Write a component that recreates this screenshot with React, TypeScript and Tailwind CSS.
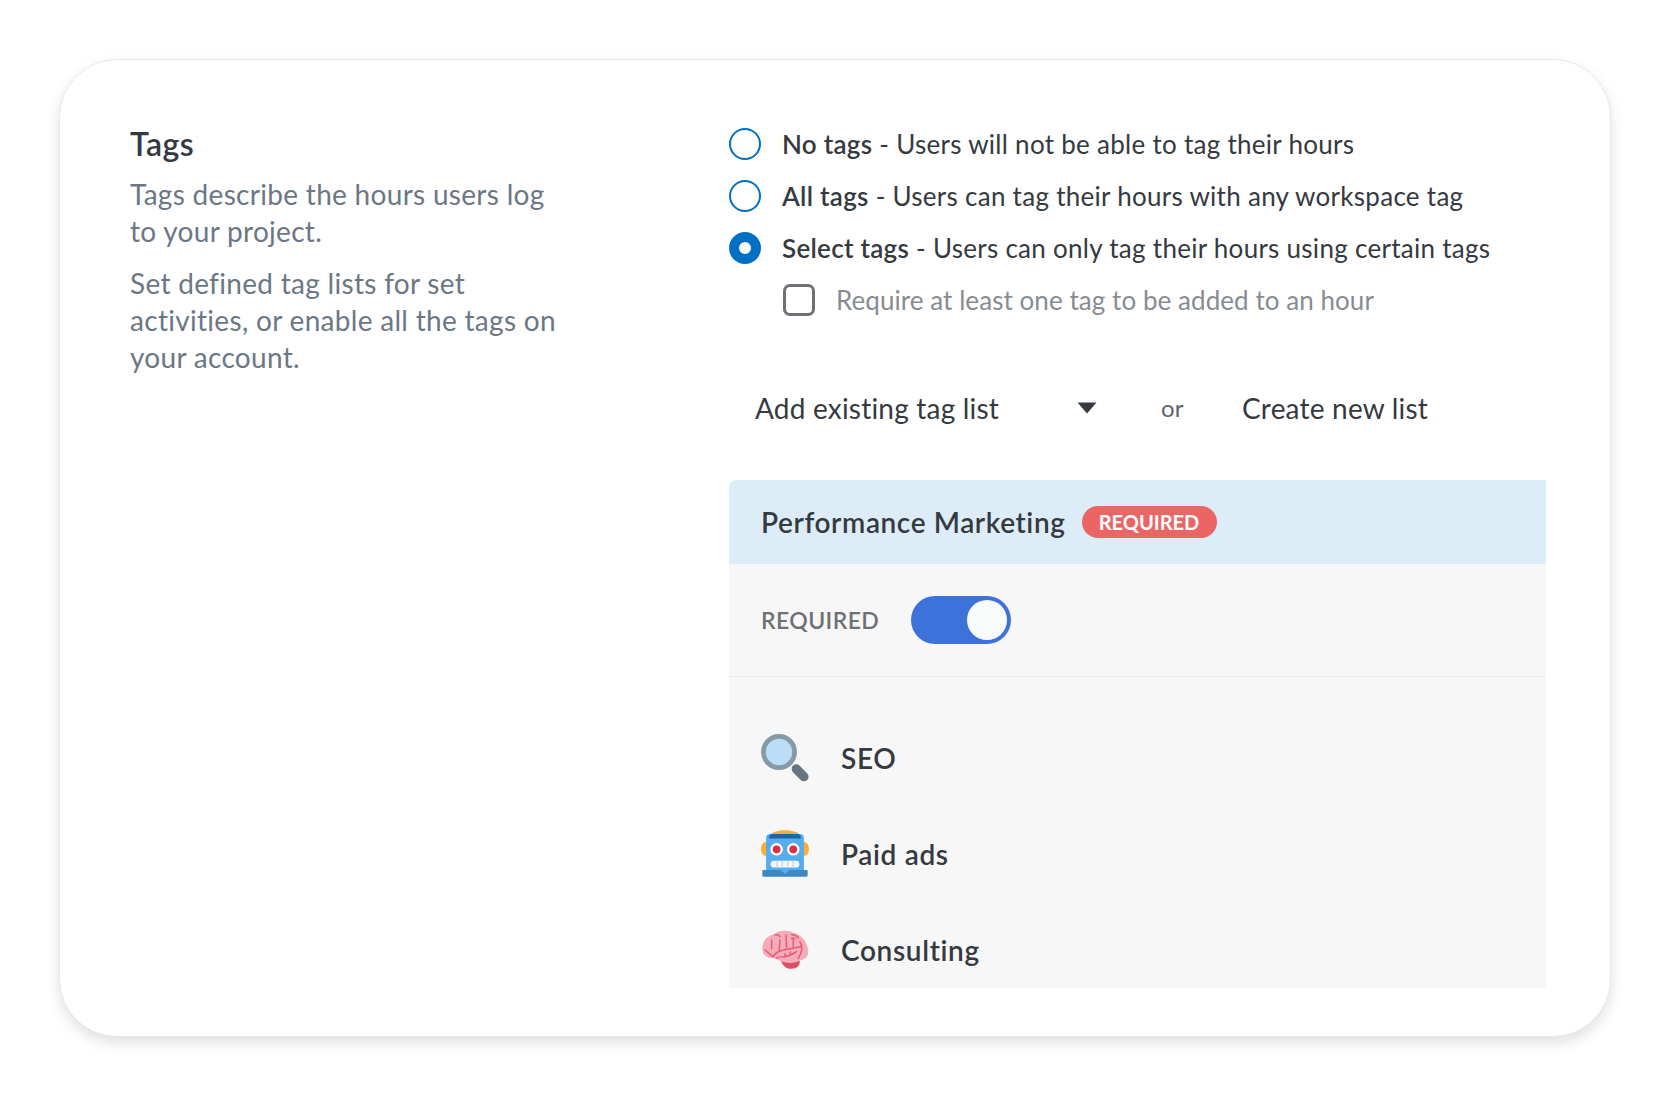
import React from "react";

const SearchEmoji = () => (
  <svg viewBox="0 0 36 36" className="w-12 h-12 shrink-0">
    <path d="M26.5 26.2 L32.2 32" stroke="#66757F" strokeWidth="7" strokeLinecap="round" />
    <circle cx="13.5" cy="13.5" r="11.7" fill="#BBDDF5" stroke="#8899A6" strokeWidth="3.6" />
  </svg>
);

const RobotEmoji = () => (
  <svg viewBox="0 0 36 36" className="w-12 h-12 shrink-0">
    <path d="M7 3.5 C10 -1 26 -1 29 3.5 Z" fill="#FFAC33" />
    <path d="M4 9 C1 9 0 12 0 14.3 C0 16.5 1 19.5 4 19.5 Z M32 9 C35 9 36 12 36 14.3 C36 16.5 35 19.5 32 19.5 Z" fill="#FFAC33" />
    <path d="M3.8 6 C3.8 4 5 3 7 3 H29 C31 3 32.2 4 32.2 6 V30.5 H3.8 Z" fill="#55ACEE" />
    <path d="M6 6.3 C6 4 7 3 9 3 H27 C29 3 30 4 30 6.3 Z" fill="#226699" />
    <circle cx="11.7" cy="14.5" r="4.7" fill="#fff" />
    <circle cx="24.2" cy="14.5" r="4.7" fill="#fff" />
    <circle cx="11.7" cy="14.5" r="2.9" fill="#DD2E44" />
    <circle cx="24.2" cy="14.5" r="2.9" fill="#DD2E44" />
    <rect x="7.2" y="23" width="21.6" height="5.2" rx="2.6" fill="#F5F8FA" />
    <path d="M12 23 V28.2 M16 23 V28.2 M20 23 V28.2 M24 23 V28.2" stroke="#CCD6DD" strokeWidth="1" />
    <path d="M1 31 C1 30.4 1.4 30 2 30 H34 C34.6 30 35 30.4 35 31 V34 C35 34.6 34.6 35 34 35 H2 C1.4 35 1 34.6 1 34 Z" fill="#3B88C3" />
    <path d="M14.5 30 H21.5 L18 33 Z" fill="#55ACEE" />
  </svg>
);

const BrainEmoji = () => (
  <svg viewBox="0 0 36 36" className="w-12 h-12 shrink-0">
    <path d="M15 26 C19 25 25 25 29 26 C29.5 29.5 27 32 22.5 32 C19 32 16.5 30 15 26 Z" fill="#DD2E44" opacity="0.85" />
    <path d="M1 17 C1 10 6 7 10 6 C13 3 21 3 24 5 C30 6 35 12 35.5 19 C35.5 23 33 25 29 26 C25 28 20 28 17 27 C14 26.5 13 25 9 24 C4 24 1 21 1 17 Z" fill="#F4ABBA" />
    <path d="M3 18 L9 23 C11 20 14 18.5 17 18 C22 17 26 16 30.5 15.5 M8 10.5 V17 M10.5 6.8 C12 6.2 13.5 6.8 14.2 8 M14.2 10.5 L13.7 18 M18.7 6.7 L19.2 16 M23 9.3 H25.5 M24.2 9.3 V15.5 M23 6.3 C25 6.5 27 7.5 28 8.8 M29 11.8 C30.5 14 31 16 30.5 18 C30 20.5 29 22.5 28 24.2 M11.7 24.2 C14 22.5 16 23.5 18 23 C21 22.5 24 21 26.7 19.2 M18 23 V20.8 M22 21.8 V19.5" fill="none" stroke="#EA596E" strokeWidth="1.1" strokeLinecap="round" strokeLinejoin="round" />
  </svg>
);

const options = [
  { title: "No tags", text: " - Users will not be able to tag their hours", checked: false },
  { title: "All tags", text: " - Users can tag their hours with any workspace tag", checked: false },
  { title: "Select tags", text: " - Users can only tag their hours using certain tags", checked: true },
];

const tags = [
  { name: "SEO", icon: <SearchEmoji /> },
  { name: "Paid ads", icon: <RobotEmoji /> },
  { name: "Consulting", icon: <BrainEmoji /> },
];

const App = () => {
  return (
    <div className="w-[1670px] h-[1096px] bg-white p-[59px] font-['Lato',sans-serif] text-[#343a40]">
      <div className="flex w-[1552px] h-[978px] pl-[70px] pr-[64px] pt-[64px] pb-[48px] bg-white border border-[#e8e8e8] rounded-[58px] shadow-[0_6px_14px_rgba(0,0,0,0.12)]">
        <div className="w-[440px] mr-[159px] shrink-0">
          <h2 className="text-[32px] leading-[40px] font-semibold tracking-[0.5px]">Tags</h2>
          <p className="mt-[12px] text-[28px] leading-[37px] tracking-[0.3px] text-[#6b7785]">
            Tags describe the hours users log to your project.
          </p>
          <p className="mt-[15px] text-[28px] leading-[37px] tracking-[0.3px] text-[#6b7785]">
            Set defined tag lists for set activities, or enable all the tags on your account.
          </p>
        </div>
        <div className="flex flex-col flex-1 min-w-0">
          <div className="flex flex-col gap-[20px] pt-[4px]">
            {options.map((o) => (
              <div key={o.title} className="flex items-center h-[32px] text-[26px] tracking-[0.28px]">
                {o.checked ? (
                  <span className="w-[32px] h-[32px] rounded-full border-[10px] border-[#0070c4] bg-white shrink-0" />
                ) : (
                  <span className="w-[32px] h-[32px] rounded-full border-2 border-[#0070c4] shrink-0" />
                )}
                <span className="ml-[21px] whitespace-pre">
                  <span className="font-semibold">{o.title}</span>
                  {o.text}
                </span>
              </div>
            ))}
            <div className="flex items-center h-[32px] pl-[54px] text-[26px] tracking-[0.06px] text-[#878c91]">
              <span className="w-[32px] h-[32px] rounded-[7px] border-[3px] border-[#6d7175] shrink-0" />
              <span className="ml-[21px]">Require at least one tag to be added to an hour</span>
            </div>
          </div>
          <div className="flex items-center h-[40px] mt-[72px] pl-[26px] text-[28px] tracking-[0.2px]">
            <span className="w-[322px]">Add existing tag list</span>
            <svg viewBox="0 0 20 12" className="w-[20px] h-[12px] shrink-0">
              <path d="M0.5 0.5 H19.5 L10 11.5 Z" fill="#343a40" />
            </svg>
            <span className="ml-[64px] w-[81px] text-[24px] text-[#5f6368]">or</span>
            <span>Create new list</span>
          </div>
          <div className="flex flex-col flex-1 mt-[52px] bg-[#f7f7f8] rounded-tl-[8px] overflow-hidden">
            <div className="flex items-center h-[84px] px-[32px] bg-[#ddedf8]">
              <span className="text-[28px] font-semibold tracking-[0.6px]">Performance Marketing</span>
              <span className="flex items-center justify-center w-[135px] h-[32px] ml-[16px] rounded-full bg-[#eb6565] text-white text-[20px] font-bold">
                REQUIRED
              </span>
            </div>
            <div className="flex items-center h-[113px] px-[32px] border-b border-[#ececec]">
              <span className="w-[150px] text-[23px] font-semibold tracking-[0.4px] text-[#6d7175]">REQUIRED</span>
              <div className="flex justify-end items-center w-[100px] h-[48px] p-[4px] rounded-full bg-[#3e72db]">
                <span className="w-[40px] h-[40px] rounded-full bg-[#f9fbfb]" />
              </div>
            </div>
            <div className="flex flex-col gap-[48px] pt-[57px] px-[32px]">
              {tags.map((t) => (
                <div key={t.name} className="flex items-center h-[48px]">
                  {t.icon}
                  <span className="ml-[32px] text-[28px] font-semibold tracking-[0.65px]">{t.name}</span>
                </div>
              ))}
            </div>
          </div>
        </div>
      </div>
    </div>
  );
};

export default App;
